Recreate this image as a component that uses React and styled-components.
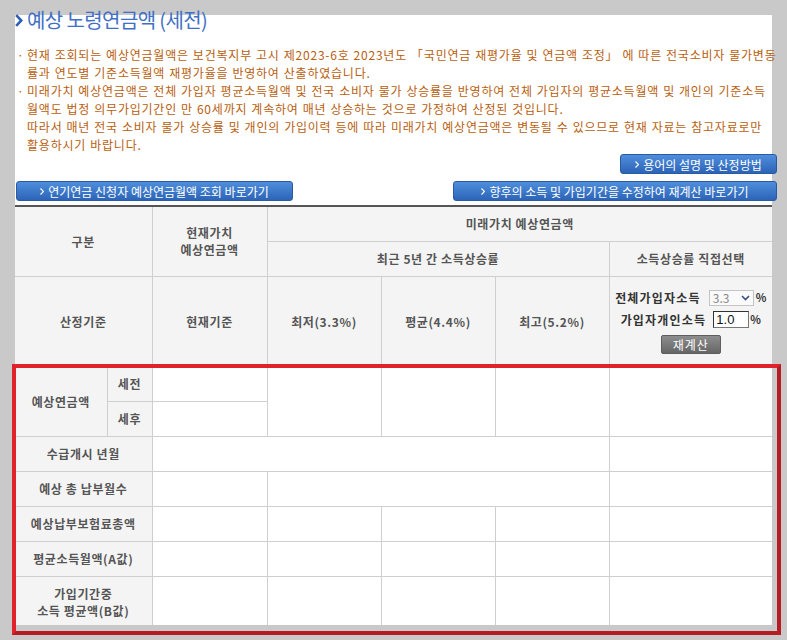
import React from "react";
import styled, { createGlobalStyle } from "styled-components";

const GlobalStyle = createGlobalStyle`
  html, body {
    margin: 0;
    padding: 0;
    background: #c9c9c9;
  }
  body {
    font-family: "Noto Sans CJK KR", "Noto Sans", sans-serif;
  }
`;

const notices = [
  {
    bullet: true,
    text: "현재 조회되는 예상연금월액은 보건복지부 고시 제2023-6호 2023년도 「국민연금 재평가율 및 연금액 조정」 에 따른 전국소비자 물가변동",
  },
  { text: "률과 연도별 기준소득월액 재평가율을 반영하여 산출하였습니다." },
  {
    bullet: true,
    text: "미래가치 예상연금액은 전체 가입자 평균소득월액 및 전국 소비자 물가 상승률을 반영하여 전체 가입자의 평균소득월액 및 개인의 기준소득",
  },
  { text: "월액도 법정 의무가입기간인 만 60세까지 계속하여 매년 상승하는 것으로 가정하여 산정된 것입니다." },
  {
    text: "따라서 매년 전국 소비자 물가 상승률 및 개인의 가입이력 등에 따라 미래가치 예상연금액은 변동될 수 있으므로 현재 자료는 참고자료로만",
  },
  { text: "활용하시기 바랍니다." },
];

const colWidths = [92, 45, 115, 114, 114, 114, 163];

function Arrow() {
  return (
    <svg width="4" height="7" viewBox="0 0 4 7">
      <path d="M0.5 0.5 L3.5 3.5 L0.5 6.5" fill="none" stroke="#fff" strokeWidth="1.2" />
    </svg>
  );
}

function App() {
  return (
    <Page>
      <GlobalStyle />
      <Panel>
        <Title>
          <svg width="8" height="13" viewBox="0 0 8 13">
            <path d="M1.2 1.2 L6.3 6.5 L1.2 11.8" fill="none" stroke="#2d5db5" strokeWidth="2.6" />
          </svg>
          예상 노령연금액 (세전)
        </Title>

        <Notice>
          {notices.map((line, i) => (
            <Line key={i} $bullet={line.bullet}>
              {line.bullet && <Bullet>·</Bullet>}
              {line.text}
            </Line>
          ))}
        </Notice>

        <ButtonRow $align="flex-end" $gap={0}>
          <LinkButton href="#" $w={157}>
            <Arrow />
            용어의 설명 및 산정방법
          </LinkButton>
        </ButtonRow>
        <ButtonRow $align="space-between" $gap={7}>
          <LinkButton href="#" $w={277}>
            <Arrow />
            연기연금 신청자 예상연금월액 조회 바로가기
          </LinkButton>
          <LinkButton href="#" $w={324}>
            <Arrow />
            향후의 소득 및 가입기간을 수정하여 재계산 바로가기
          </LinkButton>
        </ButtonRow>

        <TableWrap>
          <Table>
            <colgroup>
              {colWidths.map((w, i) => (
                <Col key={i} $w={w} />
              ))}
            </colgroup>
            <tbody>
              <Row $h={35}>
                <Th colSpan={2} rowSpan={2}>구분</Th>
                <Th rowSpan={2}>
                  현재가치
                  <br />
                  예상연금액
                </Th>
                <Th colSpan={4}>미래가치 예상연금액</Th>
              </Row>
              <Row $h={35}>
                <Th colSpan={3}>최근 5년 간 소득상승률</Th>
                <Th>소득상승률 직접선택</Th>
              </Row>
              <Row $h={90}>
                <Th colSpan={2}>산정기준</Th>
                <Th>현재기준</Th>
                <Th>최저(3.3%)</Th>
                <Th>평균(4.4%)</Th>
                <Th>최고(5.2%)</Th>
                <Th>
                  <Controls>
                    <ControlLine $gap={8}>
                      <ControlLabel>전체가입자소득</ControlLabel>
                      <SelectBox>
                        <span>3.3</span>
                        <svg width="9" height="6" viewBox="0 0 9 6">
                          <path d="M1 1 L4.5 4.5 L8 1" fill="none" stroke="#3a4f7a" strokeWidth="1.6" />
                        </svg>
                      </SelectBox>
                      <Percent>%</Percent>
                    </ControlLine>
                    <ControlLine $gap={7}>
                      <ControlLabel>가입자개인소득</ControlLabel>
                      <RateInput defaultValue="1.0" />
                      <Percent>%</Percent>
                    </ControlLine>
                    <RecalcButton type="button">재계산</RecalcButton>
                  </Controls>
                </Th>
              </Row>

              <Row $h={35}>
                <Th rowSpan={2}>예상연금액</Th>
                <Th>세전</Th>
                <Td />
                <Td rowSpan={2} />
                <Td rowSpan={2} />
                <Td rowSpan={2} />
                <Td rowSpan={2} />
              </Row>
              <Row $h={35}>
                <Th>세후</Th>
                <Td />
              </Row>
              <Row $h={35}>
                <Th colSpan={2}>수급개시 년월</Th>
                <Td colSpan={4} />
                <Td />
              </Row>
              <Row $h={35}>
                <Th colSpan={2}>예상 총 납부월수</Th>
                <Td />
                <Td colSpan={3} />
                <Td />
              </Row>
              {["예상납부보험료총액", "평균소득월액(A값)"].map((label) => (
                <Row $h={35} key={label}>
                  <Th colSpan={2}>{label}</Th>
                  <Td />
                  <Td />
                  <Td />
                  <Td />
                  <Td />
                </Row>
              ))}
              <Row $h={52}>
                <Th colSpan={2}>
                  가입기간중
                  <br />
                  소득 평균액(B값)
                </Th>
                <Td />
                <Td />
                <Td />
                <Td />
                <Td />
              </Row>
            </tbody>
          </Table>
        </TableWrap>
      </Panel>
      <Highlight />
    </Page>
  );
}

const Page = styled.div`
  position: relative;
  width: 787px;
  height: 640px;
  overflow: hidden;
  padding: 15px 0 0 15px;
  box-sizing: border-box;
`;

const Panel = styled.div`
  width: 757px;
  height: 610px;
  background: #fff;
  display: flex;
  flex-direction: column;
`;

const Title = styled.h2`
  margin: -7px 0 0;
  display: flex;
  align-items: center;
  gap: 4px;
  font-size: 20px;
  line-height: 24px;
  font-weight: 400;
  letter-spacing: -0.6px;
  color: #3f70c6;
`;

const Notice = styled.div`
  margin-top: 14px;
  padding-left: 2px;
  font-size: 12px;
  line-height: 18px;
  color: #b8600f;
  white-space: nowrap;
  letter-spacing: 0.78px;
  word-spacing: 0.6px;
`;

const Line = styled.div`
  padding-left: ${(p) => (p.$bullet ? 0 : 10)}px;
`;

const Bullet = styled.span`
  display: inline-block;
  width: 10px;
`;

const ButtonRow = styled.div`
  display: flex;
  justify-content: ${(p) => p.$align};
  margin: ${(p) => p.$gap}px -5px 0 1px;
`;

const LinkButton = styled.a`
  display: inline-flex;
  align-items: center;
  justify-content: center;
  gap: 4px;
  width: ${(p) => p.$w}px;
  height: 20px;
  box-sizing: border-box;
  background: linear-gradient(#4f8edc, #2c64b7);
  border: 1px solid #2b5aa3;
  border-radius: 3px;
  color: #fff;
  font-size: 12px;
  text-decoration: none;
  white-space: nowrap;
`;

const TableWrap = styled.div`
  margin-top: 4px;
  flex: 1;
  overflow: hidden;
`;

const Table = styled.table`
  width: 757px;
  table-layout: fixed;
  border-collapse: collapse;
  border-top: 2px solid #555;
  border-left: hidden;
  border-right: hidden;
`;

const Col = styled.col`
  width: ${(p) => p.$w}px;
`;

const Row = styled.tr`
  height: ${(p) => p.$h}px;
`;

const Th = styled.th`
  padding: 0;
  background: #f4f4f4;
  border: 1px solid #cfcfcf;
  color: #555;
  font-size: 12px;
  line-height: 17px;
  font-weight: 700;
  letter-spacing: 0.6px;
  text-align: center;
  vertical-align: middle;
  white-space: nowrap;
`;

const Td = styled.td`
  padding: 0;
  background: #fff;
  border: 1px solid #cfcfcf;
`;

const Controls = styled.div`
  display: flex;
  flex-direction: column;
  align-items: center;
  gap: 4px;
  color: #333;
  letter-spacing: 0;
`;

const ControlLine = styled.div`
  display: flex;
  align-items: center;
  gap: ${(p) => p.$gap}px;
  height: 18px;
`;

const ControlLabel = styled.span`
  letter-spacing: 1.2px;
`;

const SelectBox = styled.div`
  display: flex;
  align-items: center;
  justify-content: space-between;
  width: 45px;
  height: 16px;
  box-sizing: border-box;
  padding: 0 3px 0 3px;
  border: 1px solid #c4c4c4;
  background: #fafafa;
  color: #888;
  font-weight: 400;
  font-size: 12px;
`;

const RateInput = styled.input`
  width: 36px;
  height: 17px;
  box-sizing: border-box;
  padding: 0 2px;
  border: 1px solid #777;
  border-top-color: #333;
  border-left-color: #333;
  font-family: "Liberation Sans", sans-serif;
  font-size: 13px;
  color: #111;
`;

const Percent = styled.span`
  margin-left: -6px;
  font-size: 11px;
`;

const RecalcButton = styled.button`
  margin-top: 2px;
  width: 60px;
  height: 19px;
  padding: 0;
  border: 1px solid #5e5e5e;
  border-radius: 2px;
  background: linear-gradient(#8d8d8d, #666);
  color: #fff;
  font-family: "Noto Sans CJK KR", sans-serif;
  font-size: 12px;
  font-weight: 400;
  letter-spacing: 1px;
`;

const Highlight = styled.div`
  position: absolute;
  left: 12px;
  top: 364px;
  width: 769px;
  height: 271px;
  box-sizing: border-box;
  border: 4px solid #e0222b;
  border-right-color: #b71c24;
  border-bottom-color: #b71c24;
  pointer-events: none;
`;

export default App;
